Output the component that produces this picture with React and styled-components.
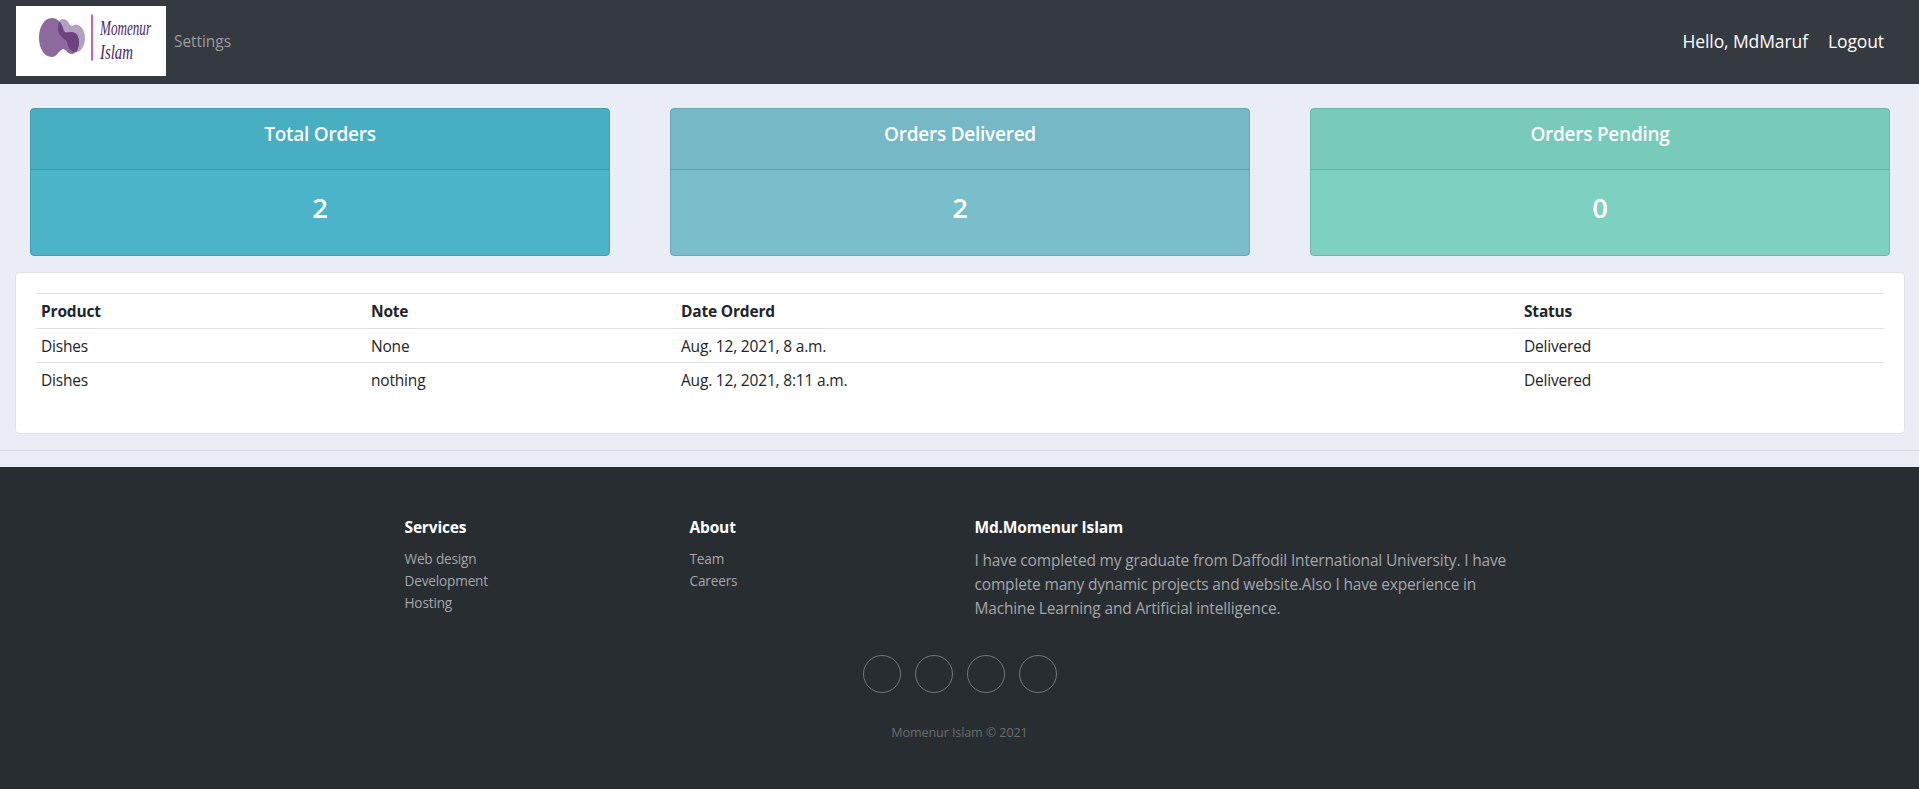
import React from "react";
import styled, { createGlobalStyle } from "styled-components";

const GlobalStyle = createGlobalStyle`
  *, *::before, *::after { box-sizing: border-box; }
  body {
    margin: 0;
    background: #eaedf5;
    color: #212529;
    font: 400 16px/24px "Open Sans", "Noto Sans", sans-serif;
  }
  h3, h5, p, ul { margin: 0; padding: 0; }
  ul { list-style: none; }
  a { color: inherit; text-decoration: none; }
`;

const Navbar = styled.nav`
  display: flex;
  align-items: center;
  height: 84px;
  padding: 0 35px 2px 16px;
  background: #353940;
`;
const Logo = styled.svg`
  width: 150px;
  height: 70px;
  flex: none;
`;
const NavLink = styled.a`
  margin-left: 8px;
  font-size: 15.5px;
  letter-spacing: -0.06px;
  color: #9a9c9f;
`;
const Account = styled.div`
  display: flex;
  gap: 20px;
  margin-left: auto;
  font-size: 17.5px;
  letter-spacing: -0.1px;
  color: #fff;
`;

const Stats = styled.section`
  display: grid;
  grid-template-columns: repeat(3, 1fr);
  gap: 60px;
  padding: 24px 29px 16px 30px;
`;
const Stat = styled.article`
  height: 148px;
  border: 1px solid ${(p) => p.$edge};
  border-radius: 4px;
  background: ${(p) => p.$body};
  color: #fff;
  text-align: center;
  overflow: hidden;
`;
const StatHead = styled.header`
  height: 61px;
  padding-top: 13px;
  background: rgba(0, 0, 0, 0.03);
  border-bottom: 1px solid rgba(0, 0, 0, 0.125);
`;
const StatTitle = styled.h5`
  font-size: 19px;
  line-height: 24px;
  font-weight: 600;
  letter-spacing: -0.25px;
`;
const StatValue = styled.h3`
  padding-top: 21px;
  font-size: 27.5px;
  line-height: 34px;
  font-weight: 600;
`;

const Panel = styled.section`
  height: 162px;
  margin: 0 14px 0 15px;
  padding: 20px;
  border: 1px solid #dfe0e2;
  border-radius: 4px;
  background: #fff;
`;
const Table = styled.table`
  width: 100%;
  border-spacing: 0;
  table-layout: fixed;
  font-size: 15.5px;
`;
const Col = styled.col`
  width: ${(p) => p.$width};
`;
const Row = styled.tr`
  height: ${(p) => p.$height}px;
`;
const Cell = styled.td`
  padding: 4px 5px;
  border-top: 1px solid #dee2e6;
  text-align: left;
  line-height: 24px;
  letter-spacing: -0.19px;
`;
const Divider = styled.hr`
  margin: 16px 0;
  border: 0;
  border-top: 1px solid #d2d5da;
`;

const Footer = styled.footer`
  height: 322px;
  padding-top: 49px;
  background: #282d32;
  color: #fff;
`;
const Columns = styled.div`
  display: grid;
  grid-template-columns: 285px 285px 570px;
  width: 1140px;
  height: 139px;
  margin: 0 auto;
`;
const Column = styled.div`
  padding: 0 15px;
`;
const Heading = styled.h3`
  margin-bottom: 10px;
  font-size: 15.5px;
  line-height: 22px;
  font-weight: 700;
  letter-spacing: -0.16px;
`;
const Item = styled.li`
  font-size: 13.6px;
  line-height: 22px;
  letter-spacing: -0.16px;
  color: #a4a6a8;
`;
const Bio = styled.p`
  font-size: 15.5px;
  line-height: 24px;
  letter-spacing: -0.163px;
  color: #a4a6a8;
  white-space: pre-line;
`;
const Social = styled.div`
  display: flex;
  justify-content: center;
  gap: 14px;
`;
const Circle = styled.a`
  width: 38px;
  height: 38px;
  border: 1px solid #74777a;
  border-radius: 50%;
`;
const Copyright = styled.p`
  padding-top: 30px;
  text-align: center;
  font-size: 12.6px;
  line-height: 20px;
  letter-spacing: -0.12px;
  color: #696c70;
`;

const stats = [
  { title: "Total Orders", value: 2, body: "#4bb4c9", edge: "#429eb0" },
  { title: "Orders Delivered", value: 2, body: "#7abecc", edge: "#6ba7b3" },
  { title: "Orders Pending", value: 0, body: "#7cd1c0", edge: "#6db7a8" },
];
const orders = [
  { height: 34, cells: ["Dishes", "None", "Aug. 12, 2021, 8 a.m.", "Delivered"] },
  { height: 35, cells: ["Dishes", "nothing", "Aug. 12, 2021, 8:11 a.m.", "Delivered"] },
];
const bio = `I have completed my graduate from Daffodil International University. I have
complete many dynamic projects and website.Also I have experience in
Machine Learning and Artificial intelligence.`;

const backBlob =
  "M47 13C51 13 53 17 54 19C56 21 58 18.500 60 18.500C66 19 69 26 69 32C69 40 65 46 60 46C55 46 52 42 51 36C50 33 42 31 42 23C42 17 44 13 47 13Z";
const frontBlob =
  "M36 12C42 12 46 17 47.500 24C49 28 52 26 55 26C60 26 63 30 63 36C63 43 60 48 56 48C51 48 50 43 47 43C43 44 41 51 36 51C28 51 23 42 23 32C23 21 28 12 36 12Z";

function BrandLogo() {
  return (
    <Logo viewBox="0 0 150 70">
      <clipPath id="front-blob"><path d={frontBlob} /></clipPath>
      <rect width="150" height="70" fill="#fff" />
      <path d={backBlob} fill="#b39fc1" />
      <path d={frontBlob} fill="#8c6a9d" />
      <path d={backBlob} fill="#6c427f" clipPath="url(#front-blob)" />
      <path d="M76 8.500V54.500" stroke="#c83a8c" strokeWidth="1.600" />
      <g fill="#4c2467" fontFamily="Liberation Serif, serif" fontStyle="italic" fontSize="20">
        <text x="84" y="29" textLength="51" lengthAdjust="spacingAndGlyphs">Momenur</text>
        <text x="84" y="53" textLength="33" lengthAdjust="spacingAndGlyphs">Islam</text>
      </g>
    </Logo>
  );
}

export default function App() {
  return (
    <>
      <GlobalStyle />
      <Navbar>
        <BrandLogo />
        <NavLink href="#">Settings</NavLink>
        <Account>
          <span>Hello, MdMaruf</span>
          <a href="#">Logout</a>
        </Account>
      </Navbar>
      <Stats>
        {stats.map((s) => (
          <Stat key={s.title} $body={s.body} $edge={s.edge}>
            <StatHead><StatTitle>{s.title}</StatTitle></StatHead>
            <StatValue>{s.value}</StatValue>
          </Stat>
        ))}
      </Stats>
      <Panel>
        <Table>
          <colgroup>
            <Col $width="330px" /><Col $width="310px" /><Col $width="843px" /><Col />
          </colgroup>
          <tbody>
            <Row $height={35}>
              {["Product", "Note", "Date Orderd", "Status"].map((t) => (
                <Cell as="th" key={t}>{t}</Cell>
              ))}
            </Row>
            {orders.map((row, i) => (
              <Row key={i} $height={row.height}>
                {row.cells.map((t) => <Cell key={t}>{t}</Cell>)}
              </Row>
            ))}
          </tbody>
        </Table>
      </Panel>
      <Divider />
      <Footer>
        <Columns>
          <Column>
            <Heading>Services</Heading>
            <ul>
              <Item>Web design</Item>
              <Item>Development</Item>
              <Item>Hosting</Item>
            </ul>
          </Column>
          <Column>
            <Heading>About</Heading>
            <ul>
              <Item>Team</Item>
              <Item>Careers</Item>
            </ul>
          </Column>
          <Column>
            <Heading>Md.Momenur Islam</Heading>
            <Bio>{bio}</Bio>
          </Column>
        </Columns>
        <Social><Circle /><Circle /><Circle /><Circle /></Social>
        <Copyright>Momenur Islam © 2021</Copyright>
      </Footer>
    </>
  );
}
